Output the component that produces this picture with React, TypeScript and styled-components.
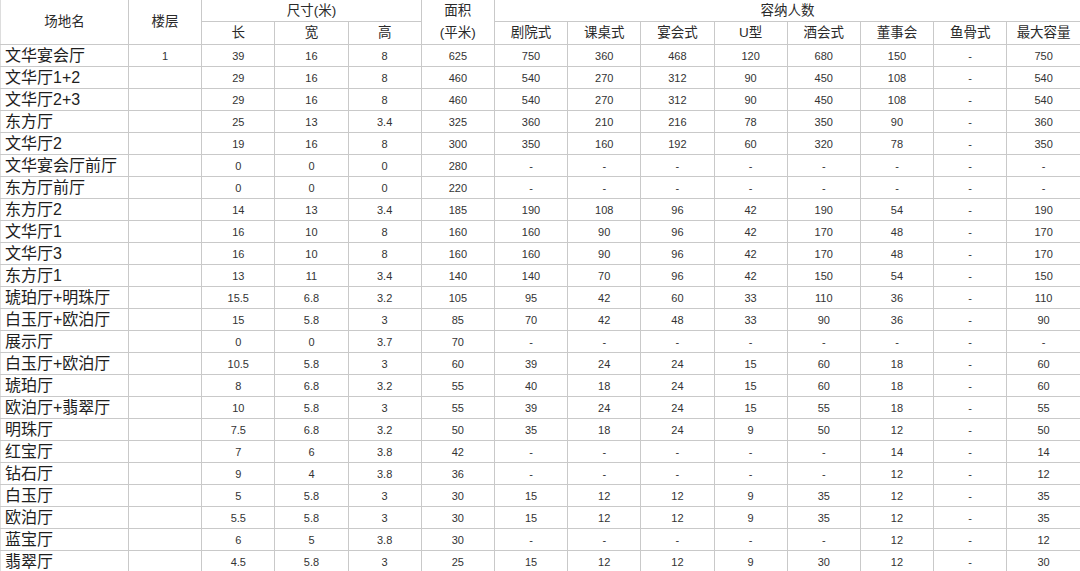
import React from "react";
import styled, { createGlobalStyle } from "styled-components";

type Row = [string, string, ...string[]];

const rows: Row[] = [
  ["文华宴会厅", "1", "39", "16", "8", "625", "750", "360", "468", "120", "680", "150", "-", "750"],
  ["文华厅1+2", "", "29", "16", "8", "460", "540", "270", "312", "90", "450", "108", "-", "540"],
  ["文华厅2+3", "", "29", "16", "8", "460", "540", "270", "312", "90", "450", "108", "-", "540"],
  ["东方厅", "", "25", "13", "3.4", "325", "360", "210", "216", "78", "350", "90", "-", "360"],
  ["文华厅2", "", "19", "16", "8", "300", "350", "160", "192", "60", "320", "78", "-", "350"],
  ["文华宴会厅前厅", "", "0", "0", "0", "280", "-", "-", "-", "-", "-", "-", "-", "-"],
  ["东方厅前厅", "", "0", "0", "0", "220", "-", "-", "-", "-", "-", "-", "-", "-"],
  ["东方厅2", "", "14", "13", "3.4", "185", "190", "108", "96", "42", "190", "54", "-", "190"],
  ["文华厅1", "", "16", "10", "8", "160", "160", "90", "96", "42", "170", "48", "-", "170"],
  ["文华厅3", "", "16", "10", "8", "160", "160", "90", "96", "42", "170", "48", "-", "170"],
  ["东方厅1", "", "13", "11", "3.4", "140", "140", "70", "96", "42", "150", "54", "-", "150"],
  ["琥珀厅+明珠厅", "", "15.5", "6.8", "3.2", "105", "95", "42", "60", "33", "110", "36", "-", "110"],
  ["白玉厅+欧泊厅", "", "15", "5.8", "3", "85", "70", "42", "48", "33", "90", "36", "-", "90"],
  ["展示厅", "", "0", "0", "3.7", "70", "-", "-", "-", "-", "-", "-", "-", "-"],
  ["白玉厅+欧泊厅", "", "10.5", "5.8", "3", "60", "39", "24", "24", "15", "60", "18", "-", "60"],
  ["琥珀厅", "", "8", "6.8", "3.2", "55", "40", "18", "24", "15", "60", "18", "-", "60"],
  ["欧泊厅+翡翠厅", "", "10", "5.8", "3", "55", "39", "24", "24", "15", "55", "18", "-", "55"],
  ["明珠厅", "", "7.5", "6.8", "3.2", "50", "35", "18", "24", "9", "50", "12", "-", "50"],
  ["红宝厅", "", "7", "6", "3.8", "42", "-", "-", "-", "-", "-", "14", "-", "14"],
  ["钻石厅", "", "9", "4", "3.8", "36", "-", "-", "-", "-", "-", "12", "-", "12"],
  ["白玉厅", "", "5", "5.8", "3", "30", "15", "12", "12", "9", "35", "12", "-", "35"],
  ["欧泊厅", "", "5.5", "5.8", "3", "30", "15", "12", "12", "9", "35", "12", "-", "35"],
  ["蓝宝厅", "", "6", "5", "3.8", "30", "-", "-", "-", "-", "-", "12", "-", "12"],
  ["翡翠厅", "", "4.5", "5.8", "3", "25", "15", "12", "12", "9", "30", "12", "-", "30"],
];

const sizes = ["长", "宽", "高"];
const layouts = ["剧院式", "课桌式", "宴会式", "U型", "酒会式", "董事会", "鱼骨式", "最大容量"];

const App = () => {
  return (
    <>
      <GlobalStyle />
      <Sheet>
        <colgroup>
          <col style={{ width: 128 }} />
          {Array.from({ length: 13 }).map((_, i) => (
            <col key={i} />
          ))}
        </colgroup>
        <thead>
          <tr>
            <HeadCell rowSpan={2}>场地名</HeadCell>
            <HeadCell rowSpan={2}>楼层</HeadCell>
            <HeadCell colSpan={3}>尺寸(米)</HeadCell>
            <HeadCell rowSpan={2}>
              <StackLine>面积</StackLine>
              <StackLine>(平米)</StackLine>
            </HeadCell>
            <HeadCell colSpan={8}>容纳人数</HeadCell>
          </tr>
          <tr>
            {sizes.map((s) => (
              <HeadCell key={s}>{s}</HeadCell>
            ))}
            {layouts.map((s) => (
              <HeadCell key={s}>{s}</HeadCell>
            ))}
          </tr>
        </thead>
        <tbody>
          {rows.map((r, i) => (
            <tr key={i}>
              <NameCell>{r[0]}</NameCell>
              {r.slice(1).map((v, j) => (
                <Cell key={j}>{v}</Cell>
              ))}
            </tr>
          ))}
        </tbody>
      </Sheet>
    </>
  );
};

const GlobalStyle = createGlobalStyle`
  html, body {
    margin: 0;
    padding: 0;
    background: #ffffff;
  }
  body {
    font-family: "Liberation Sans", "Noto Sans CJK SC", sans-serif;
    overflow: hidden;
  }
`;

const Sheet = styled.table`
  width: 1080px;
  height: 570px;
  table-layout: fixed;
  border-collapse: collapse;
  color: #333;

  td, th {
    border: 1px solid #c9c9c9;
    padding: 0;
    overflow: hidden;
    white-space: nowrap;
  }
  thead tr:first-child th {
    border-top: none;
  }
  tr > *:last-child {
    border-right: none;
  }
  tr > *:first-child {
    border-left: 1px solid #dddddd;
  }
`;

const HeadCell = styled.th`
  font-weight: normal;
  font-size: 13.5px;
  line-height: 20px;
  text-align: center;
  vertical-align: middle;
  color: #2a2a2a;
`;

const StackLine = styled.div`
  height: 22px;
  line-height: 22px;
`;

const NameCell = styled.td`
  font-size: 16px;
  line-height: 20px;
  text-align: left;
  padding-left: 4px !important;
  color: #1e1e1e;
`;

const Cell = styled.td`
  font-size: 11px;
  line-height: 20px;
  text-align: center;
  color: #333;
`;

export default App;
